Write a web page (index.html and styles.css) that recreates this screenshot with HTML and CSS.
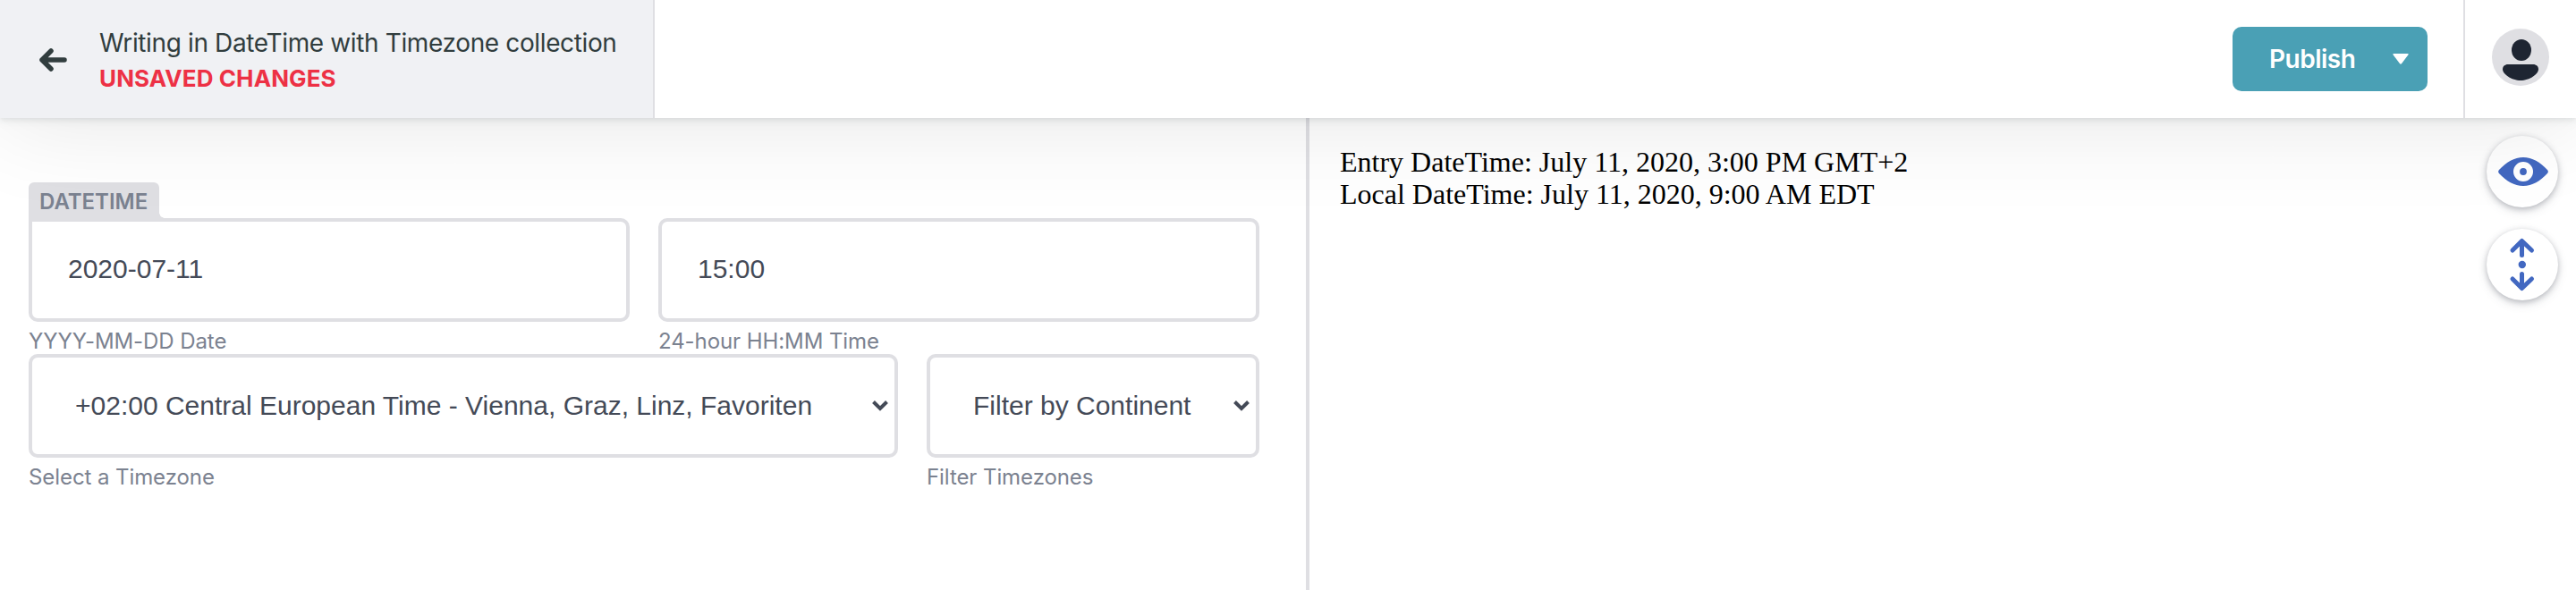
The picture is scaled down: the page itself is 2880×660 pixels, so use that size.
FILE: index.html
```html
<!DOCTYPE html>
<html lang="en">
<head>
<meta charset="utf-8">
<title>DateTime with Timezone</title>
<link rel="stylesheet" href="styles.css">
</head>
<body>
<header class="toolbar">
  <a class="back">
    <svg class="back-arrow" viewBox="0 0 32 26" width="32" height="26"><path d="M14 3 4 13l10 10M4 13h25" /></svg>
    <span class="back-text">
      <span class="collection">Writing in DateTime with Timezone collection</span>
      <span class="status">UNSAVED CHANGES</span>
    </span>
  </a>
  <div class="actions">
    <button class="publish"><span>Publish</span><svg viewBox="0 0 18 12" width="18" height="12"><path d="M1.500 0h15q2 0 .8 1.600l-7.200 9.400q-1.100 1.400-2.200 0L.7 1.600Q-.5 0 1.500 0z"/></svg></button>
  </div>
  <div class="account">
    <svg class="avatar" viewBox="0 0 64 64" width="64" height="64">
      <circle class="avatar-bg" cx="32" cy="32" r="32"/>
      <rect x="22" y="12" width="22" height="24" rx="11" ry="12"/>
      <path d="M18 40h28c3.600 0 6 2.300 6 5.500C52 51 42 58 32 58s-20-7-20-12.500C12 42.300 14.400 40 18 40z"/>
    </svg>
  </div>
</header>
<main class="editor">
  <section class="controls">
    <div class="tab">DATETIME</div>
    <div class="row">
      <div class="field half"><div class="box first">2020-07-11</div><div class="hint hint-date">YYYY-MM-DD Date</div></div>
      <div class="field half"><div class="box">15:00</div><div class="hint hint-time">24-hour HH:MM Time</div></div>
    </div>
    <div class="row">
      <div class="field zone"><div class="box select"><span>+02:00 Central European Time - Vienna, Graz, Linz, Favoriten</span><svg class="chevron" viewBox="0 0 18 12" width="18" height="12"><path d="M1.500 1.500L9 9l7.500-7.500"/></svg></div><div class="hint">Select a Timezone</div></div>
      <div class="field filter"><div class="box select"><span>Filter by Continent</span><svg class="chevron" viewBox="0 0 18 12" width="18" height="12"><path d="M1.500 1.500L9 9l7.500-7.500"/></svg></div><div class="hint">Filter Timezones</div></div>
    </div>
  </section>
  <section class="preview">
    <div class="entry">
      <div>Entry DateTime: July 11, 2020, 3:00 PM GMT+2</div>
      <div>Local DateTime: July 11, 2020, 9:00 AM EDT</div>
    </div>
    <div class="view-buttons">
      <div class="round"><svg viewBox="0 0 80 80" width="80" height="80"><path class="solid" fill-rule="evenodd" d="M14 38C22 29.500 31 24 41 24s19 5.500 27 14q1.700 2 0 4C60 50.500 51 56 41 56s-19-5.500-27-14q-1.700-2 0-4zM41 29a11 11 0 1 0 0 22a11 11 0 1 0 0-22z"/><circle class="solid" cx="41" cy="40" r="3.900"/></svg></div>
      <div class="round"><svg viewBox="0 0 80 80" width="80" height="80"><path class="line" d="M29 24l10.500-10.500L50.500 24M39.500 14v15.500M39.500 50.500V66M29 56l10.500 10.500L50.500 56"/><circle class="solid" cx="39.800" cy="40" r="4.200"/></svg></div>
    </div>
  </section>
</main>
</body>
</html>
```
FILE: styles.css
```css
* { box-sizing: border-box; }
body { margin: 0; height: 660px; overflow: hidden; background: #fff; font-family: Inter, Roboto, sans-serif; }
.toolbar { position: relative; z-index: 2; display: flex; height: 132px; background: #fff; box-shadow: 0 4px 12px 0 rgba(68,74,87,.05), 0 2px 6px 0 rgba(68,74,87,.1), 0 4px 108px rgba(0,0,0,.1); }
.back { display: flex; align-items: center; width: 732px; padding-left: 43px; background: #f0f1f4; border-right: 2px solid #dfdfe3; }
.back-arrow { fill: none; stroke: #313d3e; stroke-width: 5.500; stroke-linecap: round; stroke-linejoin: round; margin-top: 2px; }
.back-text { display: flex; flex-direction: column; padding-left: 36px; white-space: nowrap; line-height: 40px; color: #313d3e; padding-top: 4px; }
.collection { font-size: 28px; letter-spacing: -.37px; }
.status { font-size: 26px; font-weight: 700; color: #ed3145; letter-spacing: .1px; }
.actions { flex: 1; display: flex; justify-content: flex-end; padding: 30px 40px 0 0; }
.publish { display: flex; align-items: center; justify-content: space-between; width: 218px; height: 72px; padding: 0 21px 0 41px; border: 0; border-radius: 10px; background: #4aa0b5; color: #fff; font: 600 28px Inter, sans-serif; letter-spacing: -.5px; }
.publish svg { fill: #fff; }
.account { width: 126px; border-left: 2px solid #dfdfe3; padding: 32px 0 0 30px; }
.avatar { display: block; fill: #1e2532; }
.avatar-bg { fill: #dfdfe3; }
.editor { display: flex; height: 528px; }
.controls { width: 1460px; padding: 72px 52px 0 32px; }
.tab { position: relative; width: 146px; height: 40px; padding-left: 12px; border-radius: 6px 6px 0 0; background: #dfdfe3; color: #7b8290; font-size: 24px; font-weight: 600; line-height: 43px; }
.tab::after { content: ""; position: absolute; left: 100%; bottom: 0; width: 6px; height: 6px; background: radial-gradient(circle at 100% 0, transparent 5.500px, #dfdfe3 6px); }
.row { display: flex; gap: 32px; height: 152px; }
.half { width: 672px; }
.zone { width: 972px; }
.filter { width: 372px; }
.box { height: 116px; padding: 0 40px; border: 4px solid #dfdfe3; border-radius: 10px; background: #fff; color: #444a57; font: 30px/106px "Liberation Sans", Arial, sans-serif; white-space: nowrap; }
.box.first { border-top-left-radius: 0; }
.select { display: flex; justify-content: space-between; align-items: center; padding: 0 7px 0 48px; line-height: 110px; }
.chevron { fill: none; stroke: #444a57; stroke-width: 4; }
.hint { color: #7b8290; font-size: 24px; line-height: 43px; letter-spacing: -.08px; white-space: nowrap; }
.preview { flex: 1; display: flex; justify-content: space-between; border-left: 4px solid #dfdfe3; padding: 20px 20px 0 34px; }
.entry { padding-top: 11px; color: #000; font: 32px/36px "Liberation Serif", "Times New Roman", serif; }
.view-buttons { display: flex; flex-direction: column; gap: 24px; }
.round { width: 80px; height: 80px; border-radius: 50%; background: #fff; box-shadow: 0 4px 12px 0 rgba(68,74,87,.15), 0 2px 6px 0 rgba(68,74,87,.3); }
.round svg { display: block; }
.solid { fill: #4268c1; }
.line { fill: none; stroke: #4268c1; stroke-width: 5; stroke-linecap: round; stroke-linejoin: round; }
```
